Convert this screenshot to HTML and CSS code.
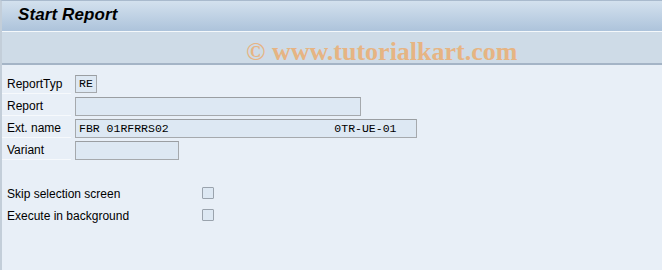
FILE: index.html
```html
<!DOCTYPE html>
<html>
<head>
	<meta charset="utf-8">
	<title>Start Report</title>
	<link rel="stylesheet" href="styles.css">
</head>
<body>
<div id="screen">
	<div class="titlebar">
		<span class="title">Start Report</span>
	</div>
	<div class="toolbar">
		<span class="watermark">&copy; www.tutorialkart.com</span>
	</div>
	<div class="content">
		<div class="row">
			<span class="label">ReportTyp</span>
			<span class="field w_type">RE</span>
		</div>
		<div class="row">
			<span class="label">Report</span>
			<span class="field w_report"></span>
		</div>
		<div class="row">
			<span class="label">Ext. name</span>
			<span class="field w_ext">FBR 01RFRRS02                        0TR-UE-01</span>
		</div>
		<div class="row">
			<span class="label">Variant</span>
			<span class="field w_variant"></span>
		</div>
		<div class="checks">
			<div class="check_row">
				<span class="check_name">Skip selection screen</span>
				<span class="checkbox"></span>
			</div>
			<div class="check_row">
				<span class="check_name">Execute in background</span>
				<span class="checkbox"></span>
			</div>
		</div>
	</div>
</div>
</body>
</html>
```

FILE: styles.css
```css
html, body {
	margin: 0;
	padding: 0;
}
body {
	font-family: "Liberation Sans", Arial, sans-serif;
	font-size: 12px;
	background: #e8eff7;
	color: #000;
}
#screen {
	width: 662px;
	height: 270px;
	box-sizing: border-box;
	border-top: 1px solid #a9bacd;
	border-left: 2px solid #c3ced9;
	background: #e8eff7;
}
.titlebar {
	box-sizing: border-box;
	padding-left: 16px;
	background: linear-gradient(#d3e1ee, #adc3db);
	border-bottom: 1px solid #f4f8fb;
	height: 31px;
	display: flex;
	align-items: center;
}
.title {
	font-size: 17px;
	font-weight: bold;
	font-style: italic;
	color: #000;
	letter-spacing: 0.1px;
	margin-top: -3px;
}
.toolbar {
	height: 33px;
	box-sizing: border-box;
	background: #cedbe7;
	border-bottom: 2px solid #a4b4c6;
	padding-left: 244px;
	padding-top: 6px;
	overflow: hidden;
}
.watermark {
	font-family: "Liberation Serif", "Times New Roman", serif;
	font-weight: bold;
	font-size: 26px;
	line-height: 28px;
	color: #e6b483;
}
.content {
	padding: 8px 0 0 0;
}
.row {
	display: flex;
	align-items: center;
	height: 22px;
}
.label {
	width: 69px;
	height: 20px;
	line-height: 20px;
	box-sizing: border-box;
	padding-left: 5px;
	border-bottom: 1px solid #f6f9fc;
	margin-right: 4px;
}
.field {
	height: 19px;
	box-sizing: border-box;
	border: 1px solid #a5a9ad;
	border-top-color: #9a9ea2;
	background: #dde8f3;
	font-family: "Liberation Mono", "Courier New", monospace;
	font-size: 11.5px;
	line-height: 17px;
	padding-left: 3px;
	white-space: pre;
	overflow: hidden;
}
.w_type {
	width: 22px;
	height: 18px;
	line-height: 16px;
}
.w_report {
	width: 286px;
}
.w_ext {
	width: 342px;
}
.w_variant {
	width: 104px;
}
.checks {
	margin-top: 22px;
}
.check_row {
	display: flex;
	align-items: center;
	height: 22px;
	padding-left: 5px;
}
.check_name {
	width: 195px;
}
.checkbox {
	width: 12px;
	height: 12px;
	box-sizing: border-box;
	border: 1px solid #9aa3ad;
	border-radius: 1px;
	background: #dde8f3;
	margin-top: -2px;
}
```
